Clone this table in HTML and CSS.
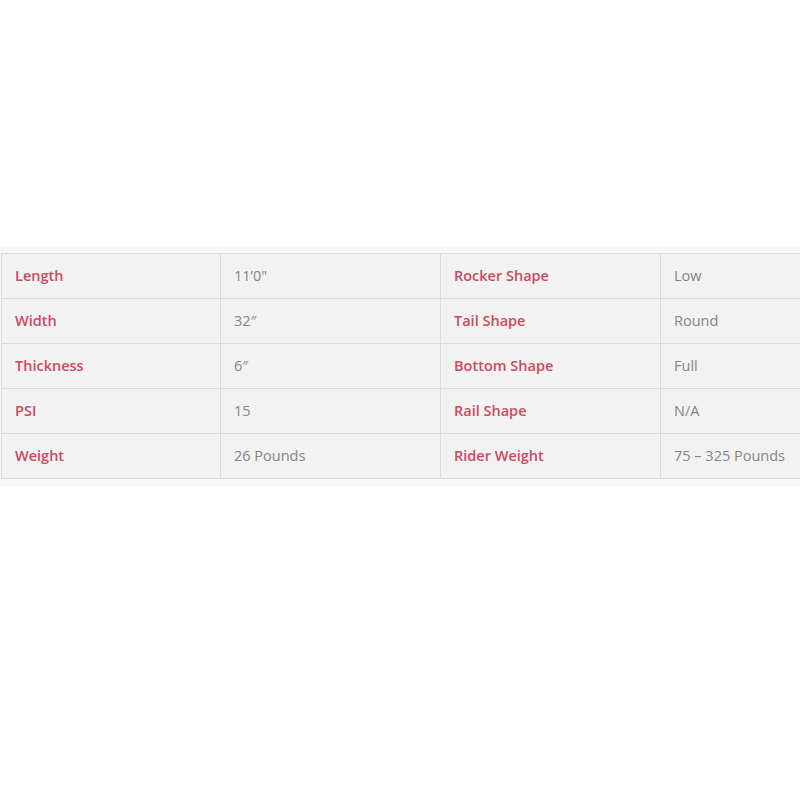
FILE: index.html
```html
<!DOCTYPE html>
<html>
<head>
<meta charset="utf-8">
<link rel="stylesheet" href="styles.css">
</head>
<body>
<div class="band">
  <table class="specs">
    <colgroup><col class="c1"><col class="c"><col class="c"><col class="c"></colgroup>
    <tr><td class="lbl">Length</td><td class="val">11’0"</td><td class="lbl">Rocker Shape</td><td class="val">Low</td></tr>
    <tr><td class="lbl">Width</td><td class="val">32″</td><td class="lbl">Tail Shape</td><td class="val">Round</td></tr>
    <tr><td class="lbl">Thickness</td><td class="val">6″</td><td class="lbl">Bottom Shape</td><td class="val">Full</td></tr>
    <tr><td class="lbl">PSI</td><td class="val">15</td><td class="lbl">Rail Shape</td><td class="val">N/A</td></tr>
    <tr><td class="lbl">Weight</td><td class="val">26 Pounds</td><td class="lbl">Rider Weight</td><td class="val">75 – 325 Pounds</td></tr>
  </table>
</div>
</body>
</html>
```

FILE: styles.css
```css
html, body {
  margin: 0;
  padding: 0;
  background: #ffffff;
  overflow: hidden;
}
body {
  font-family: "Open Sans", sans-serif;
  font-size: 14.5px;
}
.band {
  margin-top: 246px;
  background: #f7f7f7;
  padding: 7px 0 7px 1px;
  overflow: hidden;
}
.specs {
  border-collapse: collapse;
  width: 880px;
  table-layout: fixed;
  background: #f2f2f2;
}
.c1 { width: 219px; }
.c { width: 220px; }
.specs td {
  border: 1px solid #dcdcdc;
  height: 45px;
  padding: 0 0 2px 13px;
  box-sizing: border-box;
  vertical-align: middle;
}
.lbl {
  color: #cd4a5e;
  font-weight: 600;
}
.val {
  color: #858585;
}
```
